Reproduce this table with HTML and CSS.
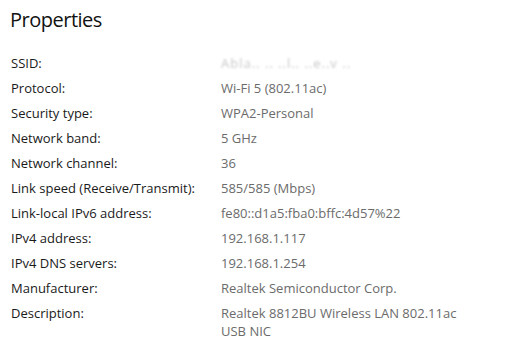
FILE: index.html
```html
<!DOCTYPE html>
<html lang="en">
<head>
<meta charset="utf-8">
<title>Properties</title>
<link rel="stylesheet" href="styles.css">
</head>
<body>
<main class="panel">
  <h1 class="title">Properties</h1>
  <dl class="props">
    <dt>SSID:</dt><dd class="masked">Abla.. ..  ..l.. ..e..v ..</dd>
    <dt>Protocol:</dt><dd>Wi-Fi 5 (802.11ac)</dd>
    <dt>Security type:</dt><dd>WPA2-Personal</dd>
    <dt>Network band:</dt><dd>5 GHz</dd>
    <dt>Network channel:</dt><dd>36</dd>
    <dt>Link speed (Receive/Transmit):</dt><dd>585/585 (Mbps)</dd>
    <dt>Link-local IPv6 address:</dt><dd>fe80::d1a5:fba0:bffc:4d57%22</dd>
    <dt>IPv4 address:</dt><dd>192.168.1.117</dd>
    <dt>IPv4 DNS servers:</dt><dd>192.168.1.254</dd>
    <dt>Manufacturer:</dt><dd>Realtek Semiconductor Corp.</dd>
    <dt>Description:</dt><dd class="wrap">Realtek 8812BU Wireless LAN 802.11ac<br>USB NIC</dd>
  </dl>
</main>
</body>
</html>
```

FILE: styles.css
```css
html, body {
  margin: 0;
  background: #ffffff;
}

.panel {
  padding: 6px 0 0 10px;
  font-family: "Open Sans", "Noto Sans", sans-serif;
  color: #111;
}

.title {
  margin: 0 0 17px 0;
  font-size: 20px;
  font-weight: 400;
  line-height: 28px;
  letter-spacing: -0.5px;
}

.props {
  display: grid;
  grid-template-columns: 211px 1fr;
  grid-auto-rows: minmax(25px, auto);
  margin: 0;
  font-size: 13px;
  line-height: 18px;
}

.props dt {
  margin: 0 0 0 1px;
  color: #1a1a1a;
  padding-top: 3px;
}

.props dd {
  margin: 0;
  color: #6b6b6b;
  padding-top: 3px;
}

.props .masked {
  color: #c8c8c8;
  filter: blur(0.8px);
  letter-spacing: 1px;
}
```
